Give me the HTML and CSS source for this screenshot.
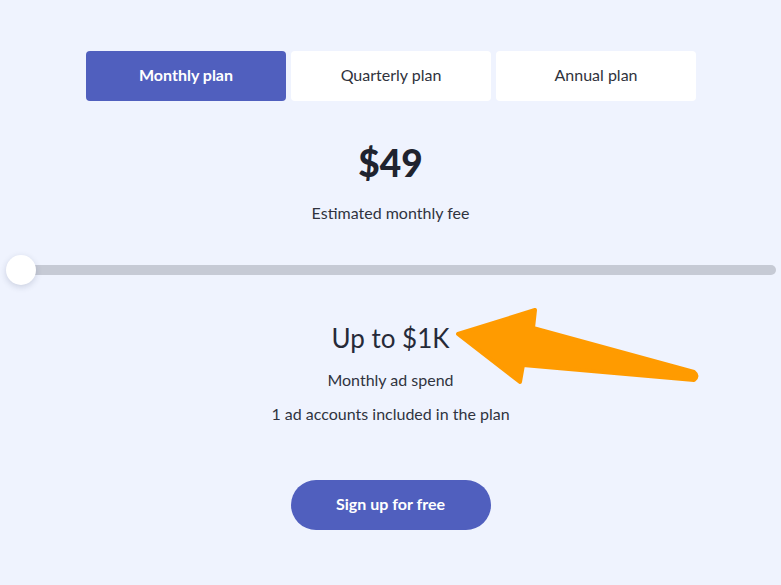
FILE: index.html
```html
<!DOCTYPE html>
<html>
<head>
<meta charset="utf-8">
<link rel="stylesheet" href="styles.css">
</head>
<body>
<div class="page">
  <div class="tabs">
    <div class="tab active">Monthly plan</div>
    <div class="tab">Quarterly plan</div>
    <div class="tab">Annual plan</div>
  </div>
  <div class="price">$49</div>
  <div class="caption fee">Estimated monthly fee</div>
  <div class="slider">
    <div class="track"></div>
    <div class="thumb"></div>
  </div>
  <div class="spend">Up to $1K</div>
  <div class="caption ad">Monthly ad spend</div>
  <div class="caption accounts">1 ad accounts included in the plan</div>
  <button class="cta">Sign up for free</button>
  <svg class="arrow" width="781" height="585" viewBox="0 0 781 585">
    <path d="M458 334 L535 310 L533 328 L694 372 Q699 376 694 380 L523 365 L520 382 Z" fill="#ff9b00" stroke="#ff9b00" stroke-width="4" stroke-linejoin="round"/>
  </svg>
</div>
</body>
</html>
```
FILE: styles.css
```css
html, body {
  margin: 0;
  padding: 0;
  background: #eff3fe;
}
body {
  font-family: Lato, "Open Sans", sans-serif;
  color: #262a36;
}
.page {
  position: relative;
  width: 781px;
  height: 585px;
  display: flex;
  flex-direction: column;
  align-items: center;
  padding-top: 51px;
  box-sizing: border-box;
}
.tabs {
  display: flex;
  gap: 5px;
  margin-left: 1px;
}
.tab {
  width: 200px;
  height: 50px;
  box-sizing: border-box;
  padding-bottom: 3px;
  background: #ffffff;
  border-radius: 4px;
  display: flex;
  align-items: center;
  justify-content: center;
  font-size: 16px;
  color: #2f323c;
}
.tab.active {
  background: #505fbe;
  color: #ffffff;
  font-weight: 700;
}
.price {
  margin-top: 41px;
  font-size: 37px;
  font-weight: 900;
  line-height: 42px;
  color: #20232e;
}
.caption {
  font-size: 16px;
  line-height: 20px;
  color: #30333e;
}
.fee {
  margin-top: 19px;
}
.slider {
  position: relative;
  align-self: stretch;
  height: 32px;
  margin-top: 31px;
  display: flex;
  align-items: center;
  padding-left: 8px;
  padding-right: 5px;
}
.track {
  flex: 1;
  height: 10px;
  border-radius: 5px;
  background: #c6cad5;
}
.thumb {
  position: absolute;
  left: 6px;
  top: 1px;
  width: 30px;
  height: 30px;
  border-radius: 50%;
  background: #ffffff;
  box-shadow: 0 2px 6px rgba(40, 50, 90, 0.18);
}
.spend {
  margin-top: 36px;
  font-size: 26px;
  line-height: 32px;
  color: #262a38;
}
.ad {
  margin-top: 16px;
}
.accounts {
  margin-top: 14px;
}
.cta {
  margin-top: 56px;
  width: 200px;
  height: 50px;
  padding: 0 0 3px 0;
  border: none;
  border-radius: 25px;
  background: #505fbe;
  color: #ffffff;
  font-family: Lato, "Open Sans", sans-serif;
  font-size: 16px;
  font-weight: 700;
}
.arrow {
  position: absolute;
  left: 0;
  top: 0;
  pointer-events: none;
}
```
